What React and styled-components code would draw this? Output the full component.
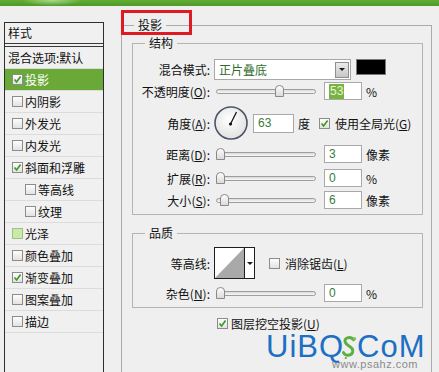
import React from 'react';
import styled, { createGlobalStyle } from 'styled-components';

const GlobalStyle = createGlobalStyle`
  html, body { margin: 0; padding: 0; }
  body {
    background: #efefef;
    font-family: "Noto Sans CJK SC", "Noto Sans", sans-serif;
    font-size: 12px;
    color: #111;
    overflow: hidden;
  }
`;

const styleItems = [
  { name: '混合选项:默认', plain: true },
  { name: '投影', checked: true, selected: true },
  { name: '内阴影' },
  { name: '外发光' },
  { name: '内发光' },
  { name: '斜面和浮雕', checked: true },
  { name: '等高线', indent: true },
  { name: '纹理', indent: true },
  { name: '光泽', tint: true },
  { name: '颜色叠加' },
  { name: '渐变叠加', checked: true },
  { name: '图案叠加' },
  { name: '描边' },
];

const Check = ({ checked, tint }) => (
  <Box $tint={tint}>
    {checked && (
      <svg width="9" height="9" viewBox="0 0 9 9">
        <path d="M1.5 4.5 L3.6 7 L7.6 1.6" fill="none" stroke="#3f9a22" strokeWidth="1.7" />
      </svg>
    )}
  </Box>
);

const Slider = ({ thumb }) => (
  <SliderWrap>
    <Track />
    <Thumb $left={thumb}>
      <svg width="9" height="12" viewBox="0 0 9 12">
        <defs>
          <linearGradient id="thumbFill" x1="0" y1="0" x2="0" y2="1">
            <stop offset="0" stopColor="#ffffff" />
            <stop offset="1" stopColor="#d9d9d9" />
          </linearGradient>
        </defs>
        <path d="M0.5 4 Q0.5 0.5 4.5 0.5 Q8.5 0.5 8.5 4 V11.5 H0.5 Z" fill="url(#thumbFill)" stroke="#8a8a8a" />
      </svg>
    </Thumb>
  </SliderWrap>
);

const Dial = () => (
  <svg width="34" height="34" viewBox="0 0 34 34">
    <defs>
      <radialGradient id="dialFill" cx="0.45" cy="0.4" r="0.6">
        <stop offset="0" stopColor="#ffffff" />
        <stop offset="1" stopColor="#e2e2e2" />
      </radialGradient>
    </defs>
    <circle cx="17" cy="17" r="16" fill="url(#dialFill)" stroke="#4c5567" strokeWidth="1.6" />
    <line x1="16.5" y1="18" x2="22.5" y2="6" stroke="#111" strokeWidth="1.2" />
    <circle cx="16.5" cy="18" r="1.6" fill="#111" />
  </svg>
);

// green "S" sprig of the watermark logo
const Sprig = () => (
  <SprigMark width="18" height="24" viewBox="0 0 18 26">
    <path d="M14 5 C10 1 3 3 5 8 C7 13 14 12 13 18 C12 23 5 23 3 19" fill="none" stroke="#5dae43" strokeWidth="3.2" strokeLinecap="round" />
    <circle cx="15" cy="4" r="1.8" fill="#7cc35c" />
    <path d="M6 24 L5 26" stroke="#5dae43" strokeWidth="2" />
  </SprigMark>
);

const SliderRow = ({ label, hot, thumb, value, unit, mt }) => (
  <FormRow $h={20} $mt={mt}>
    <FieldLabel>{label}(<u>{hot}</u>):</FieldLabel>
    <Slider thumb={thumb} />
    <NumBox $w={38} $h={18} $ml={8}>{value}</NumBox>
    <Unit>{unit}</Unit>
  </FormRow>
);

export default function App() {
  return (
    <Page>
      <GlobalStyle />
      <TopBar />
      <Main>
        <StylePanel>
          <PanelHeader>样式</PanelHeader>
          {styleItems.map((item) => (
            <StyleRow key={item.name} $selected={item.selected} $indent={item.indent} $plain={item.plain}>
              {!item.plain && <Check checked={item.checked} tint={item.tint} />}
              <span>{item.name}</span>
            </StyleRow>
          ))}
        </StylePanel>

        <Settings>
          <GroupLegend>投影</GroupLegend>

          <Group $mt={2}>
            <GroupLegend>结构</GroupLegend>
            <FormRow $h={21} $mt={0}>
              <FieldLabel>混合模式:</FieldLabel>
              <SelectBox>
                <span>正片叠底</span>
                <DropButton><Caret /></DropButton>
              </SelectBox>
              <Swatch />
            </FormRow>
            <FormRow $h={20} $mt={1}>
              <FieldLabel>不透明度(<u>O</u>):</FieldLabel>
              <Slider thumb={59} />
              <NumBox $w={38} $h={18} $ml={8}><Selected>53</Selected></NumBox>
              <Unit>%</Unit>
            </FormRow>
            <FormRow $h={34} $mt={5}>
              <FieldLabel>角度(<u>A</u>):</FieldLabel>
              <Dial />
              <NumBox $w={41} $h={19} $ml={5}>63</NumBox>
              <Unit>度</Unit>
              <InlineCheck $ml={9}>
                <Check checked />
                <span>使用全局光(<u>G</u>)</span>
              </InlineCheck>
            </FormRow>
            <SliderRow label="距离" hot="D" thumb={0} value="3" unit="像素" mt={4} />
            <SliderRow label="扩展" hot="R" thumb={0} value="0" unit="%" mt={4} />
            <SliderRow label="大小" hot="S" thumb={4} value="6" unit="像素" mt={2} />
          </Group>

          <Group $mt={10} $pt={6}>
            <GroupLegend>品质</GroupLegend>
            <FormRow $h={32} $mt={0}>
              <FieldLabel>等高线:</FieldLabel>
              <ContourBox>
                <svg width="29" height="30" viewBox="0 0 29 30">
                  <path d="M0 30 L29 0 V30 Z" fill="#a9a9a9" />
                </svg>
                <ContourArrow><Caret /></ContourArrow>
              </ContourBox>
              <InlineCheck $ml={14}>
                <Check />
                <span>消除锯齿(<u>L</u>)</span>
              </InlineCheck>
            </FormRow>
            <SliderRow label="杂色" hot="N" thumb={0} value="0" unit="%" mt={4} />
          </Group>

          <KnockoutRow>
            <Check checked />
            <span>图层挖空投影(<u>U</u>)</span>
          </KnockoutRow>
        </Settings>

        <Annotation />
        <Watermark>
          <Brand>UiBQ<Sprig />CoM</Brand>
          <Site>www.psahz.com</Site>
        </Watermark>
      </Main>
    </Page>
  );
}

const Page = styled.div`
  width: 439px;
  height: 372px;
  overflow: hidden;
  display: flex;
  flex-direction: column;
`;

const TopBar = styled.div`
  height: 6px;
  flex: none;
  background:
    radial-gradient(ellipse 30px 6px at 52px 0, rgba(190, 230, 160, 0.8), transparent),
    linear-gradient(#63ad35, #4d9a25);
`;

const Main = styled.div`
  flex: 1;
  display: flex;
  align-items: flex-start;
  padding-left: 4px;
  position: relative;
`;

const StylePanel = styled.div`
  width: 100px;
  height: 380px;
  flex: none;
  box-sizing: border-box;
  margin-top: 16px;
  border: 1px solid #2e2e2e;
  background: #f0f0f0;
`;

const PanelHeader = styled.div`
  height: 20px;
  line-height: 20px;
  padding-left: 3px;
  border-bottom: 4px double #3a3a3a;
`;

const StyleRow = styled.div`
  display: flex;
  align-items: center;
  gap: 2px;
  height: 21px;
  line-height: 21px;
  white-space: nowrap;
  padding-left: ${(p) => (p.$plain ? 3 : p.$indent ? 20 : 7)}px;
  border-bottom: 1px solid #dcdcdc;
  background: ${(p) => (p.$selected ? '#6aa838' : 'transparent')};
  color: ${(p) => (p.$selected ? '#fff' : '#111')};
`;

const Box = styled.span`
  width: 11px;
  height: 11px;
  flex: none;
  box-sizing: border-box;
  display: grid;
  place-items: center;
  border: 1px solid ${(p) => (p.$tint ? '#9cc57c' : '#8c8c8c')};
  background: ${(p) => (p.$tint ? '#cbe8ad' : 'linear-gradient(#fdfdfd, #e2e2e2)')};
`;

const Settings = styled.fieldset`
  width: 311px;
  height: 400px;
  flex: none;
  box-sizing: border-box;
  min-width: 0;
  margin: 11px 0 0 17px;
  padding: 0;
  border: 1px solid #ababab;
`;

const GroupLegend = styled.legend`
  margin-left: 12px;
  padding: 0 4px;
  font-size: 12px;
  line-height: 16px;
`;

const Group = styled.fieldset`
  width: 291px;
  box-sizing: border-box;
  min-width: 0;
  margin: ${(p) => p.$mt}px 0 0 10px;
  padding: ${(p) => p.$pt ?? 8}px 0 4px 0;
  border: 1px solid #b4b4b4;
`;

const FormRow = styled.div`
  display: flex;
  align-items: center;
  height: ${(p) => p.$h}px;
  margin-top: ${(p) => p.$mt}px;
  white-space: nowrap;
`;

const FieldLabel = styled.span`
  width: 77px;
  flex: none;
  margin-right: 4px;
  text-align: right;
`;

const SelectBox = styled.div`
  width: 137px;
  height: 21px;
  flex: none;
  box-sizing: border-box;
  display: flex;
  align-items: center;
  justify-content: space-between;
  padding: 0 1px 0 4px;
  border: 1px solid #a8a8a8;
  background: #fff;
  color: #2e6b2d;
`;

const DropButton = styled.span`
  width: 14px;
  height: 16px;
  box-sizing: border-box;
  display: grid;
  place-items: center;
  border: 1px solid #8e8e8e;
  background: linear-gradient(#ececec, #c6c6c6);
`;

const Caret = styled.span`
  width: 0;
  height: 0;
  border-left: 3px solid transparent;
  border-right: 3px solid transparent;
  border-top: 3px solid #1a1a1a;
`;

const Swatch = styled.div`
  width: 30px;
  height: 16px;
  flex: none;
  box-sizing: border-box;
  align-self: flex-start;
  margin-left: 5px;
  border: 1px solid #7a7a7a;
  background: #000;
`;

const SliderWrap = styled.div`
  position: relative;
  width: 100px;
  height: 100%;
  flex: none;
  margin-left: 2px;
  display: flex;
  align-items: center;
`;

const Track = styled.div`
  width: 100%;
  height: 5px;
  box-sizing: border-box;
  border: 1px solid #9d9d9d;
  border-radius: 3px;
  background: linear-gradient(#d9d9d9, #f8f8f8);
`;

const Thumb = styled.span`
  position: absolute;
  left: ${(p) => p.$left}px;
  top: 4px;
  display: block;
  line-height: 0;
`;

const NumBox = styled.div`
  width: ${(p) => p.$w}px;
  height: ${(p) => p.$h}px;
  flex: none;
  box-sizing: border-box;
  display: flex;
  align-items: center;
  margin-left: ${(p) => p.$ml}px;
  padding-left: 4px;
  border: 1px solid #a9a9a9;
  background: #fff;
  color: #3b7a37;
  font-family: "Liberation Sans", Arial, sans-serif;
`;

const Selected = styled.span`
  background: #78b341;
  color: #e6f4d8;
  padding: 0 1px;
  line-height: 15px;
`;

const Unit = styled.span`
  margin-left: 4px;
`;

const InlineCheck = styled.label`
  display: flex;
  align-items: center;
  gap: 5px;
  margin-left: ${(p) => p.$ml}px;
`;

const ContourBox = styled.div`
  width: 41px;
  height: 32px;
  flex: none;
  box-sizing: border-box;
  display: flex;
  border: 1px solid #1e1e1e;
  background: #fff;
`;

const ContourArrow = styled.span`
  flex: 1;
  display: grid;
  place-items: center;
  border-left: 1px solid #1e1e1e;
`;

const KnockoutRow = styled.label`
  display: flex;
  align-items: center;
  gap: 3px;
  height: 14px;
  margin-top: 8px;
  padding-left: 95px;
  white-space: nowrap;
`;

const Annotation = styled.div`
  position: absolute;
  left: 121px;
  top: 4px;
  width: 71px;
  height: 25px;
  box-sizing: border-box;
  border: 3px solid #e01a22;
`;

const Watermark = styled.div`
  position: absolute;
  left: 266px;
  top: 329px;
  width: 168px;
`;

const Brand = styled.div`
  display: flex;
  align-items: center;
  height: 24px;
  line-height: 24px;
  font-family: "Liberation Sans", Arial, sans-serif;
  font-size: 31px;
  letter-spacing: 1px;
  color: #1d6fc4;
  white-space: nowrap;
`;

const SprigMark = styled.svg`
  flex: none;
  margin: 0 -1px 0 -4px;
`;

const Site = styled.div`
  margin-left: 66px;
  height: 11px;
  line-height: 11px;
  font-family: "Liberation Sans", Arial, sans-serif;
  font-size: 11px;
  letter-spacing: 0.5px;
  color: #8b8b8b;
`;
